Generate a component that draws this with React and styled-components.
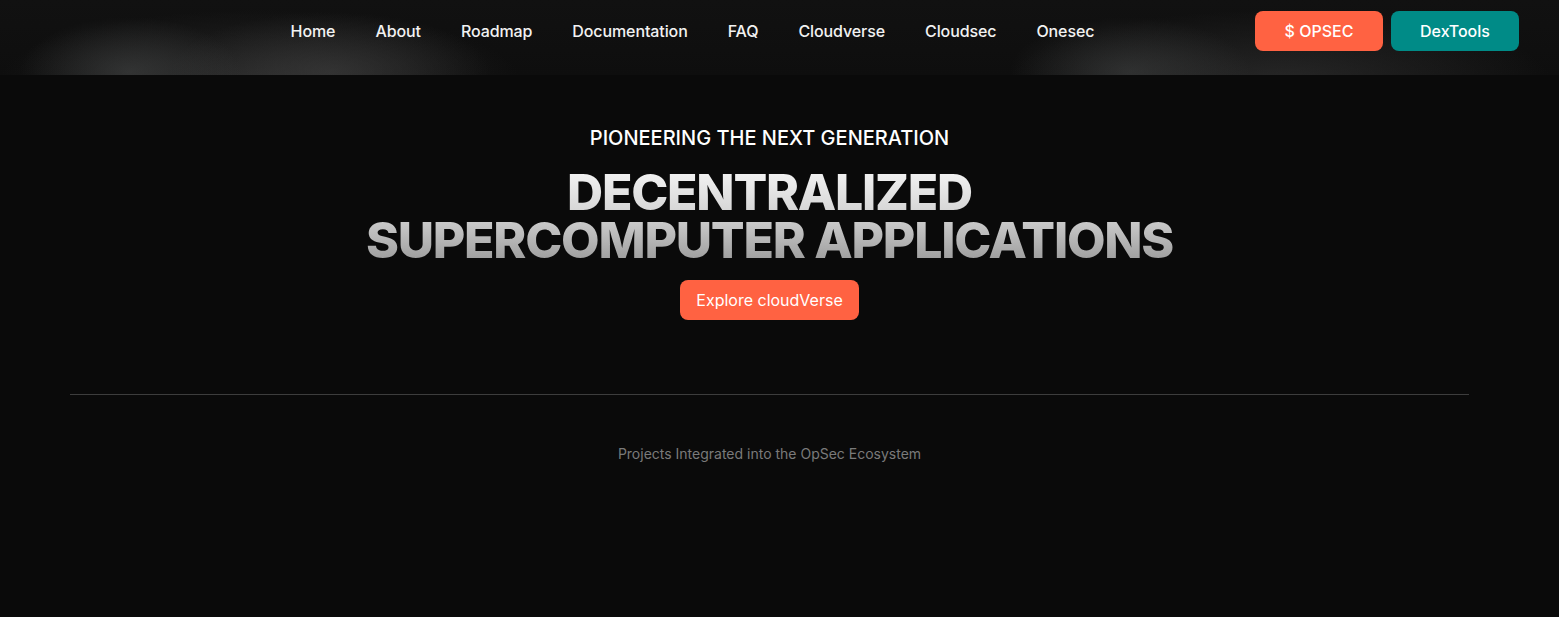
import React from 'react';
import styled, { createGlobalStyle } from 'styled-components';

const links = ['Home', 'About', 'Roadmap', 'Documentation', 'FAQ', 'Cloudverse', 'Cloudsec', 'Onesec'];

const App = () => {
  return (
    <>
      <GlobalStyle />
      <Page>
        <Header>
          <LogoSpace />
          <Nav>
            {links.map((l) => (
              <NavLink key={l} href="#">{l}</NavLink>
            ))}
          </Nav>
          <Actions>
            <HeadButton $bg="#ff6242">$ OPSEC</HeadButton>
            <HeadButton $bg="#008b87">DexTools</HeadButton>
          </Actions>
        </Header>

        <Main>
          <Hero>
            <Eyebrow>PIONEERING THE NEXT GENERATION</Eyebrow>
            <Title>
              DECENTRALIZED
              <br />
              SUPERCOMPUTER APPLICATIONS
            </Title>
            <Cta>Explore cloudVerse</Cta>
          </Hero>

          <Divider />

          <Caption>Projects Integrated into the OpSec Ecosystem</Caption>
        </Main>
      </Page>
    </>
  );
};

export default App;

const GlobalStyle = createGlobalStyle`
  html, body {
    margin: 0;
    padding: 0;
    background: #0a0a0a;
  }
  body {
    font-family: Inter, "Noto Sans", sans-serif;
    -webkit-font-smoothing: antialiased;
  }
`;

const Page = styled.div`
  min-height: 617px;
  background: #0a0a0a;
  color: #fff;
`;

const Header = styled.header`
  box-sizing: border-box;
  height: 75px;
  display: flex;
  align-items: flex-start;
  justify-content: space-between;
  padding: 11px 40px 0;
  background:
    radial-gradient(ellipse 110px 55px at 130px 72px, rgba(70, 72, 72, 0.55), transparent),
    radial-gradient(ellipse 160px 60px at 330px 72px, rgba(70, 70, 70, 0.5), transparent),
    radial-gradient(ellipse 260px 70px at 260px 80px, rgba(55, 55, 55, 0.6), transparent),
    radial-gradient(ellipse 120px 55px at 1130px 72px, rgba(70, 72, 72, 0.5), transparent),
    radial-gradient(ellipse 270px 70px at 1280px 80px, rgba(55, 55, 55, 0.6), transparent),
    linear-gradient(#111111, #0e0e0e);
`;

const LogoSpace = styled.div`
  width: 90px;
  height: 40px;
`;

const Nav = styled.nav`
  display: flex;
  align-items: center;
  height: 40px;
  gap: 40px;
`;

const NavLink = styled.a`
  color: #f2f2f2;
  text-decoration: none;
  font-size: 16px;
  font-weight: 500;
  letter-spacing: -0.1px;
`;

const Actions = styled.div`
  display: flex;
  gap: 8px;
`;

const HeadButton = styled.button`
  width: 128px;
  height: 40px;
  border: none;
  border-radius: 8px;
  background: ${(p) => p.$bg};
  color: #fff;
  font-family: Inter, sans-serif;
  font-size: 16px;
  font-weight: 500;
  cursor: pointer;
`;

const Main = styled.main`
  width: 1539px;
`;

const Hero = styled.section`
  display: flex;
  flex-direction: column;
  align-items: center;
  padding-top: 51px;
`;

const Eyebrow = styled.p`
  margin: 0;
  font-size: 20px;
  font-weight: 500;
  line-height: 24px;
  color: #fff;
`;

const Title = styled.h1`
  margin: 18px 0 0;
  font-size: 50px;
  font-weight: 800;
  line-height: 48px;
  letter-spacing: -1.25px;
  text-align: center;
  background: linear-gradient(180deg, #f5f5f5 0%, #d6d6d6 45%, #9a9a9a 100%);
  -webkit-background-clip: text;
  background-clip: text;
  color: transparent;
`;

const Cta = styled.button`
  margin-top: 16px;
  width: 179px;
  height: 40px;
  border: none;
  border-radius: 8px;
  background: #ff6242;
  color: #fff;
  font-family: Inter, sans-serif;
  font-size: 16px;
  font-weight: 400;
`;

const Divider = styled.hr`
  margin: 74px 70px 0;
  border: none;
  border-top: 1px solid #3d3d3d;
`;

const Caption = styled.p`
  margin: 50px 0 0;
  text-align: center;
  font-size: 14px;
  color: #7a7a7a;
`;
